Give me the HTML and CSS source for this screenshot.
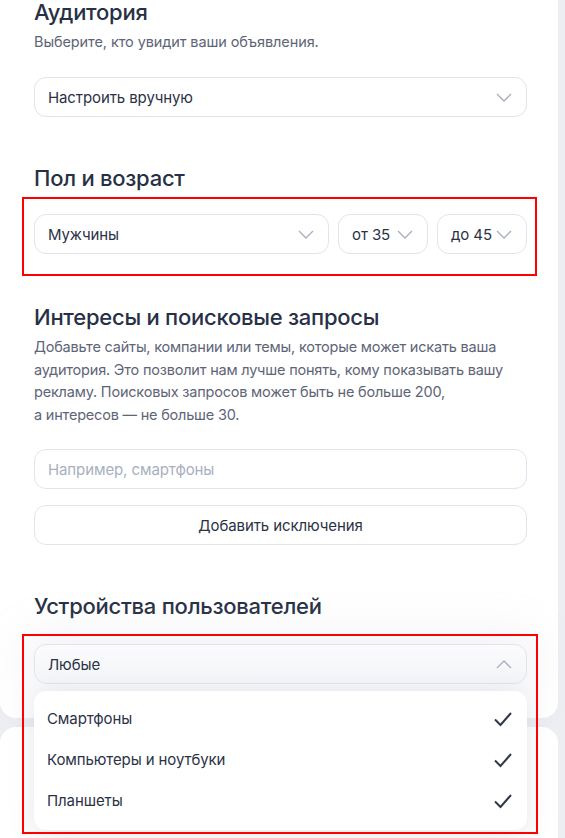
FILE: index.html
```html
<!DOCTYPE html>
<html lang="ru">
<head>
	<meta charset="UTF-8">
	<meta name="viewport" content="width=device-width">
	<title>Аудитория</title>
	<link rel="stylesheet" href="styles.css">
</head>
<body>
<div class="card">
	<h2 class="ttl ttl-first">Аудитория</h2>
	<p class="sub">Выберите, кто увидит ваши объявления.</p>
	<div class="sel mt24">
		<span>Настроить вручную</span>
		<svg class="chev" width="16" height="9" viewBox="0 0 16 9"><path d="M1 1l7 7 7-7" /></svg>
	</div>

	<h2 class="ttl mt47">Пол и возраст</h2>
	<div class="row mt22">
		<div class="sel grow">
			<span>Мужчины</span>
			<svg class="chev" width="16" height="9" viewBox="0 0 16 9"><path d="M1 1l7 7 7-7" /></svg>
		</div>
		<div class="sel age">
			<span>от 35</span>
			<svg class="chev" width="16" height="9" viewBox="0 0 16 9"><path d="M1 1l7 7 7-7" /></svg>
		</div>
		<div class="sel age">
			<span>до 45</span>
			<svg class="chev" width="16" height="9" viewBox="0 0 16 9"><path d="M1 1l7 7 7-7" /></svg>
		</div>
		<div class="mark mark-age"></div>
	</div>

	<h2 class="ttl mt49">Интересы и поисковые запросы</h2>
	<p class="txt">Добавьте сайты, компании или темы, которые может искать ваша<br>аудитория. Это позволит нам лучше понять, кому показывать вашу<br>рекламу. Поисковых запросов может быть не больше 200,<br>а&nbsp;интересов — не больше 30.</p>
	<div class="inp mt23">Например, смартфоны</div>
	<div class="btn mt16">Добавить исключения</div>

	<h2 class="ttl mt47">Устройства пользователей</h2>
	<div class="devices mt24">
		<div class="sel open">
			<span>Любые</span>
			<svg class="chev" width="16" height="9" viewBox="0 0 16 9"><path d="M1 8l7-7 7 7" /></svg>
		</div>
		<ul class="drop">
			<li><span>Смартфоны</span><svg class="chk" width="20" height="16" viewBox="0 0 20 16"><path d="M2 8.5l5.5 5.5L18 2" /></svg></li>
			<li><span>Компьютеры и ноутбуки</span><svg class="chk" width="20" height="16" viewBox="0 0 20 16"><path d="M2 8.5l5.5 5.5L18 2" /></svg></li>
			<li><span>Планшеты</span><svg class="chk" width="20" height="16" viewBox="0 0 20 16"><path d="M2 8.5l5.5 5.5L18 2" /></svg></li>
		</ul>
		<div class="mark mark-dev"></div>
	</div>
</div>
<div class="card card-next"></div>
</body>
</html>
```
FILE: styles.css
```css
*{box-sizing:border-box;margin:0;padding:0;}
body{background-color:#eceef2;font-family:Inter,"Noto Sans",Arial,sans-serif;color:#2b3245;overflow:hidden;}
.card{width:558px;background-color:#fff;border-radius:0 0 16px 16px;padding:0 31px 34px 34px;}
.card-next{border-radius:16px;margin-top:9px;height:200px;}
.ttl{font-size:22px;line-height:28px;font-weight:500;color:#283045;letter-spacing:-0.25px;}
.ttl-first{margin-top:-2px;}
.sub{font-size:14.5px;line-height:22px;color:#5e6577;margin-top:5px;letter-spacing:-0.1px;}
.txt{font-size:14.5px;line-height:22.5px;color:#5e6577;margin-top:5px;letter-spacing:-0.2px;}
.mt16{margin-top:16px;}
.mt22{margin-top:22px;}
.mt23{margin-top:23px;}
.mt24{margin-top:24px;}
.mt47{margin-top:47px;}
.mt49{margin-top:49px;}
.row{display:flex;gap:9px;position:relative;}
.grow{flex:1;}
.age{width:90px;}
.sel{height:40px;border:1px solid #e1e4ec;border-radius:12px;display:flex;align-items:center;justify-content:space-between;padding:0 14px 0 13px;font-size:15px;color:#2b3245;background-color:#fff;letter-spacing:-0.1px;}
.chev{fill:none;stroke:#a9b0c1;stroke-width:1.4;}
.inp{height:40px;border:1px solid #e1e4ec;border-radius:12px;display:flex;align-items:center;padding:0 13px;font-size:15px;color:#a8afc0;letter-spacing:-0.1px;}
.btn{height:40px;border:1px solid #e1e4ec;border-radius:12px;display:flex;align-items:center;justify-content:center;font-size:15px;color:#2b3245;letter-spacing:-0.1px;}
.devices{position:relative;}
.open{background:linear-gradient(#fbfbfd,#f4f5f8);box-shadow:0 0 40px 10px rgba(200,205,218,0.25);}
.drop{list-style:none;position:absolute;left:0;right:0;top:47px;background-color:#fff;border-radius:12px;padding:7px 0 9px;box-shadow:0 4px 24px rgba(160,168,186,0.3);z-index:2;}
.drop li{height:41px;display:flex;align-items:center;justify-content:space-between;padding:0 14px 0 13px;font-size:15px;color:#2b3245;letter-spacing:-0.1px;}
.chk{fill:none;stroke:#2f3749;stroke-width:2;}
.mark{position:absolute;border:2px solid #ff0000;z-index:3;pointer-events:none;}
.mark-age{left:-12px;right:-10px;top:-17px;bottom:-22px;}
.mark-dev{left:-12px;right:-11px;top:-10px;bottom:-150px;}
```
